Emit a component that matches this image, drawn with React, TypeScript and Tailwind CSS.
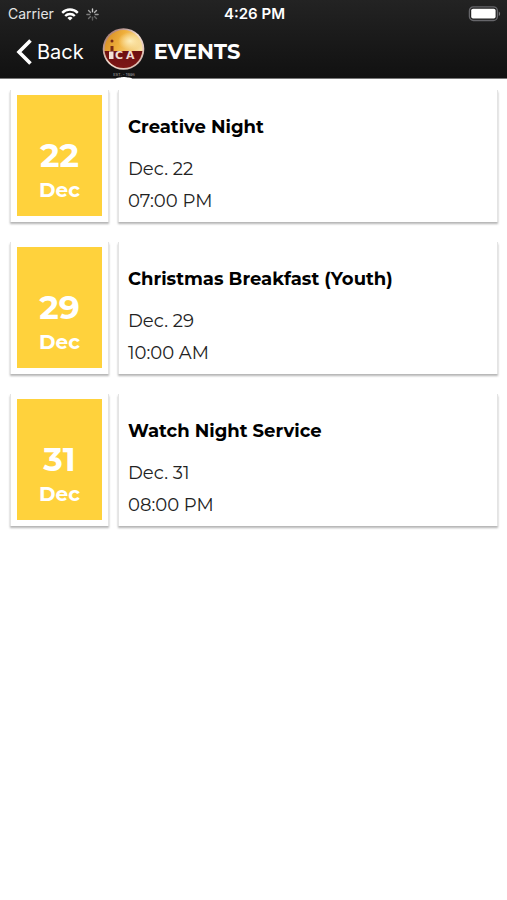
interface ChurchEvent {
  day: string;
  month: string;
  title: string;
  date: string;
  time: string;
}

const events: ChurchEvent[] = [
  { day: '22', month: 'Dec', title: 'Creative Night', date: 'Dec. 22', time: '07:00 PM' },
  { day: '29', month: 'Dec', title: 'Christmas Breakfast (Youth)', date: 'Dec. 29', time: '10:00 AM' },
  { day: '31', month: 'Dec', title: 'Watch Night Service', date: 'Dec. 31', time: '08:00 PM' }
];

const WifiIcon = () => (
  <svg className="w-[18px] h-[13px]" viewBox="0 0 18 13" fill="none" stroke="#fff" strokeWidth="2.4">
    <path d="M1.2 4.8a11 11 0 0 1 15.6 0" />
    <path d="M4.2 8a6.8 6.8 0 0 1 9.6 0" />
    <path d="M9 12.6 6.4 10a3.7 3.7 0 0 1 5.2 0z" fill="#fff" stroke="none" />
  </svg>
);

const SPOKES = [1, 0.85, 0.7, 0.4, 0.35, 0.45, 0.55, 0.75];

const Spinner = () => (
  <svg className="w-[13px] h-[13px]" viewBox="0 0 13 13" stroke="#ccc" strokeWidth="1.4" strokeLinecap="round">
    {SPOKES.map((opacity, i) => (
      <path key={i} d="M6.5 0.9v2.8" opacity={opacity} transform={`rotate(${i * 45} 6.5 6.5)`} />
    ))}
  </svg>
);

const Battery = () => (
  <svg className="w-[33px] h-[16px]" viewBox="0 0 33 16" fill="none">
    <rect x="1.4" y="0.9" width="28" height="13.6" rx="4" stroke="#66666a" strokeWidth="1.3" />
    <rect x="3.2" y="2.8" width="24.4" height="9.8" rx="1.8" fill="#fff" />
    <path d="M30.8 5.4c1.8.8 1.8 3.8 0 4.6z" fill="#77777a" />
  </svg>
);

const Logo = () => (
  <svg className="w-[44px] h-[52px] shrink-0" viewBox="0 0 44 52" role="img" aria-label="ICA">
    <defs>
      <linearGradient id="sky" x1="0" y1="0" x2="1" y2="0.5">
        <stop offset="0" stopColor="#cf8520" />
        <stop offset="0.45" stopColor="#f0b03c" />
        <stop offset="1" stopColor="#f8e2a6" />
      </linearGradient>
      <linearGradient id="ground" x1="0" y1="0" x2="0" y2="1">
        <stop offset="0" stopColor="#6d1010" />
        <stop offset="1" stopColor="#7d1616" />
      </linearGradient>
      <linearGradient id="ring" x1="0" y1="0" x2="1" y2="1">
        <stop offset="0" stopColor="#8a5a55" />
        <stop offset="0.5" stopColor="#f1dcd2" />
        <stop offset="1" stopColor="#d0aca4" />
      </linearGradient>
      <radialGradient id="glow">
        <stop offset="0" stopColor="#fff3c4" stopOpacity="0.9" />
        <stop offset="1" stopColor="#fff3c4" stopOpacity="0" />
      </radialGradient>
    </defs>
    <circle cx="21.500" cy="21" r="20.8" fill="url(#ring)" />
    <circle cx="21.500" cy="21" r="19" fill="url(#sky)" />
    <ellipse cx="28" cy="13" rx="12" ry="9" fill="url(#glow)" />
    <path d="M2.600 23h37.800a19 19 0 0 1-37.800 0z" fill="url(#ground)" />
    <circle cx="10" cy="13" r="1.5" fill="#7a2a14" />
    <path d="M8.500 18h3v5h-3z" fill="#7a2a14" />
    <path d="M7 23.500h4.500v7.500h-4.500z" fill="#f3e0d4" />
    <text x="13" y="31" fontSize="11" fontWeight="700" fill="#f0dcd0" fontFamily="'DejaVu Sans', sans-serif">
      C
    </text>
    <text x="24" y="31" fontSize="11" fontWeight="700" fill="#f0dcd0" fontFamily="'DejaVu Sans', sans-serif">
      A
    </text>
    <text x="22" y="48" fontSize="4" textAnchor="middle" fill="#aaa" fontFamily="Inter, sans-serif">
      EST. - 1986
    </text>
    <path d="M13 52c1-2.400 4-3 5.500-2.400 1.500-.8 5.500-.8 7 0 2-.6 4.500 0 5.500 2.400z" fill="#fff" />
  </svg>
);

const StatusBar = () => (
  <div className="grid grid-cols-3 items-center h-7 pl-2 pr-[6px] text-sm text-white">
    <div className="flex items-center gap-[7px]">
      <span className="text-[#e4e4e4]">Carrier</span>
      <WifiIcon />
      <Spinner />
    </div>
    <span className="text-center font-semibold text-[15px]">4:26 PM</span>
    <div className="flex justify-end">
      <Battery />
    </div>
  </div>
);

const NavBar = () => (
  <div className="flex items-start h-[50px] pl-4 text-white">
    <button type="button" className="flex items-center gap-[5px] h-12 text-xl">
      <svg className="w-4 h-[26px]" viewBox="0 0 16 26" fill="none" stroke="#fff" strokeWidth="3.6">
        <path d="M14.500 1.500 3 13l11.500 11.500" />
      </svg>
      Back
    </button>
    <div className="flex items-start gap-2 ml-[18px]">
      <Logo />
      <h1 className="text-[21px] font-bold leading-[48px] font-['Montserrat',Inter,sans-serif]">EVENTS</h1>
    </div>
  </div>
);

const EventRow = ({ day, month, title, date, time }: ChurchEvent) => (
  <li className="flex gap-[9px]">
    <div className="w-[99px] px-[6px] pt-[5px] pb-[6px] shrink-0 bg-white border-x border-[#e4e4e4] shadow-[0_2px_2px_#b4b4b4]">
      <div className="flex flex-col items-center justify-end h-[121px] pb-[11px] bg-[#ffd23c] text-white font-bold">
        <span className="text-[33px] leading-10">{day}</span>
        <span className="text-xl leading-[30px]">{month}</span>
      </div>
    </div>
    <div className="flex-1 px-[9px] pt-[21px] bg-white border-x border-[#e4e4e4] shadow-[0_2px_2px_#b4b4b4]">
      <h2 className="mb-[10px] text-lg leading-8 font-bold text-black">{title}</h2>
      <p className="text-lg leading-8 text-[#222]">{date}</p>
      <p className="text-lg leading-8 text-[#222]">{time}</p>
    </div>
  </li>
);

const App = () => {
  return (
    <div className="min-h-screen bg-white">
      <header className="bg-linear-to-b from-[#232323] to-[#111] border-b border-[#777] font-['Inter',sans-serif]">
        <StatusBar />
        <NavBar />
      </header>
      <main className="font-['Montserrat',Inter,sans-serif]">
        <ul className="flex flex-col gap-5 pt-[11px] pl-[10px] pr-[9px]">
          {events.map((event) => (
            <EventRow key={event.day} {...event} />
          ))}
        </ul>
      </main>
    </div>
  );
};

export default App;
